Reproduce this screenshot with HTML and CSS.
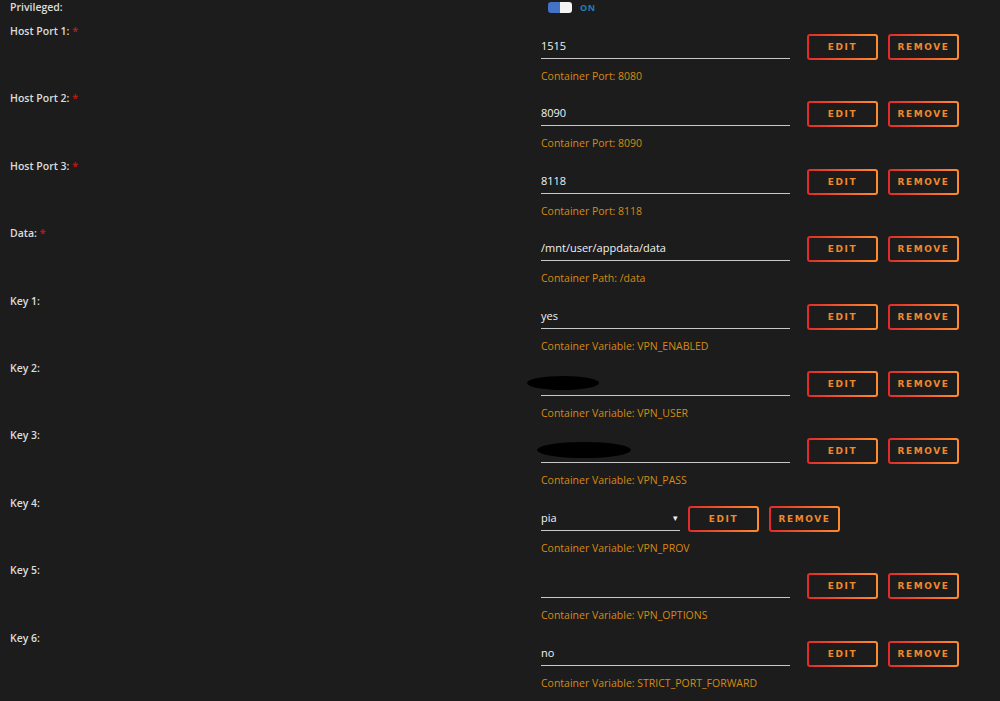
FILE: index.html
```html
<!DOCTYPE html>
<html lang="en">
<head>
    <meta charset="UTF-8">
    <title>Update Container</title>
    <link rel="stylesheet" href="styles.css">
</head>
<body>
    <div class="form">
        <!-- Privileged toggle -->
        <div class="row row-top">
            <div class="label">Privileged:</div>
            <div class="field">
                <span class="switch"><span class="switch-on"></span><span class="switch-off"></span></span>
                <span class="switch-text">ON</span>
            </div>
        </div>

        <div class="row">
            <div class="label">Host Port 1: <span class="req">*</span></div>
            <div class="field">
                <div class="line">
                    <div class="value">1515</div>
                    <button class="btn">EDIT</button>
                    <button class="btn">REMOVE</button>
                </div>
                <div class="desc">Container Port: 8080</div>
            </div>
        </div>

        <div class="row">
            <div class="label">Host Port 2: <span class="req">*</span></div>
            <div class="field">
                <div class="line">
                    <div class="value">8090</div>
                    <button class="btn">EDIT</button>
                    <button class="btn">REMOVE</button>
                </div>
                <div class="desc">Container Port: 8090</div>
            </div>
        </div>

        <div class="row">
            <div class="label">Host Port 3: <span class="req">*</span></div>
            <div class="field">
                <div class="line">
                    <div class="value">8118</div>
                    <button class="btn">EDIT</button>
                    <button class="btn">REMOVE</button>
                </div>
                <div class="desc">Container Port: 8118</div>
            </div>
        </div>

        <div class="row">
            <div class="label">Data: <span class="req">*</span></div>
            <div class="field">
                <div class="line">
                    <div class="value">/mnt/user/appdata/data</div>
                    <button class="btn">EDIT</button>
                    <button class="btn">REMOVE</button>
                </div>
                <div class="desc">Container Path: /data</div>
            </div>
        </div>

        <div class="row">
            <div class="label">Key 1:</div>
            <div class="field">
                <div class="line">
                    <div class="value">yes</div>
                    <button class="btn">EDIT</button>
                    <button class="btn">REMOVE</button>
                </div>
                <div class="desc">Container Variable: VPN_ENABLED</div>
            </div>
        </div>

        <div class="row">
            <div class="label">Key 2:</div>
            <div class="field">
                <div class="line">
                    <div class="value"><span class="hidden hidden-user"></span></div>
                    <button class="btn">EDIT</button>
                    <button class="btn">REMOVE</button>
                </div>
                <div class="desc">Container Variable: VPN_USER</div>
            </div>
        </div>

        <div class="row">
            <div class="label">Key 3:</div>
            <div class="field">
                <div class="line">
                    <div class="value"><span class="hidden hidden-pass"></span></div>
                    <button class="btn">EDIT</button>
                    <button class="btn">REMOVE</button>
                </div>
                <div class="desc">Container Variable: VPN_PASS</div>
            </div>
        </div>

        <div class="row">
            <div class="label">Key 4:</div>
            <div class="field">
                <div class="line">
                    <div class="value select">pia<span class="caret">&#9662;</span></div>
                    <button class="btn">EDIT</button>
                    <button class="btn">REMOVE</button>
                </div>
                <div class="desc">Container Variable: VPN_PROV</div>
            </div>
        </div>

        <div class="row">
            <div class="label">Key 5:</div>
            <div class="field">
                <div class="line">
                    <div class="value"></div>
                    <button class="btn">EDIT</button>
                    <button class="btn">REMOVE</button>
                </div>
                <div class="desc">Container Variable: VPN_OPTIONS</div>
            </div>
        </div>

        <div class="row">
            <div class="label">Key 6:</div>
            <div class="field">
                <div class="line">
                    <div class="value">no</div>
                    <button class="btn">EDIT</button>
                    <button class="btn">REMOVE</button>
                </div>
                <div class="desc">Container Variable: STRICT_PORT_FORWARD</div>
            </div>
        </div>
    </div>
</body>
</html>
```
FILE: styles.css
```css
body {
    margin: 0;
    padding: 0;
    background-color: #1c1c1c;
    font-family: "Open Sans", Arial, sans-serif;
    font-size: 10.5px;
    color: #e4e4e4;
    overflow: hidden;
}

.form {
    width: 1000px;
}

.row {
    display: flex;
    height: 67.4px;
}

.row-top {
    height: 24px;
}

.label {
    width: 531px;
    padding-left: 10px;
    line-height: 14px;
    font-weight: 600;
    color: #dcdcdc;
}

.req {
    color: #b81818;
    font-weight: 700;
}

.field {
    flex: 1;
}

.row-top .field {
    display: flex;
    align-items: center;
    height: 14px;
    padding-left: 7px;
}

/* Toggle switch */
.switch {
    display: flex;
    width: 24px;
    height: 11px;
    border-radius: 3px;
    overflow: hidden;
}

.switch-on {
    width: 12px;
    background-color: #4472c4;
}

.switch-off {
    width: 12px;
    background-color: #f4f4f4;
}

.switch-text {
    margin-left: 8px;
    font-size: 9px;
    font-weight: 700;
    letter-spacing: 0.5px;
    color: #1e7fb8;
}

.line {
    display: flex;
    align-items: flex-start;
    margin-top: 10px;
}

.value {
    position: relative;
    width: 249px;
    height: 24px;
    line-height: 24px;
    border-bottom: 1px solid #c8c8c8;
    color: #f2f2f2;
    font-size: 11px;
    font-weight: 400;
    margin-right: 17px;
}

.select {
    width: 139px;
    margin-right: 8px;
}

.caret {
    position: absolute;
    right: 2px;
    top: 0;
    font-size: 9px;
    color: #f0f0f0;
}

/* Redacted values */
.hidden {
    position: absolute;
    background-color: #000;
    border-radius: 50%;
}

.hidden-user {
    left: -14px;
    top: 5px;
    width: 72px;
    height: 14px;
}

.hidden-pass {
    left: -4px;
    top: 4px;
    width: 94px;
    height: 16px;
}

.btn {
    height: 26px;
    width: 71px;
    margin-right: 10px;
    padding: 0;
    border: 2px solid transparent;
    border-radius: 3px;
    background: linear-gradient(#1c1c1c, #1c1c1c) padding-box,
                linear-gradient(90deg, #e22a2a, #ff8c2f) border-box;
    color: #f0882c;
    font-family: "DejaVu Sans", sans-serif;
    font-size: 9px;
    font-weight: 700;
    letter-spacing: 1.6px;
    cursor: pointer;
}

.desc {
    margin-top: 9px;
    line-height: 14px;
    color: #d68a12;
}
```
